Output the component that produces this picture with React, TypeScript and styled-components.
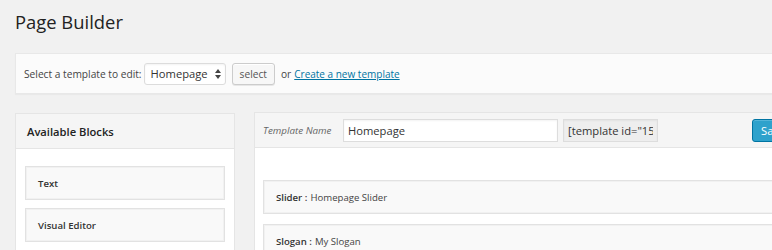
import styled, { createGlobalStyle } from 'styled-components';

const GlobalStyle = createGlobalStyle`
    html, body {
        margin: 0;
        padding: 0;
        background: #f1f1f1;
        overflow: hidden;
    }
    body {
        font-family: "Open Sans", "Liberation Sans", sans-serif;
        color: #444;
    }
`;

const Wrap = styled.div`
    width: 1010px;
    padding: 9px 0 0 15px;
`;

const Heading = styled.h1`
    margin: 0;
    font-size: 18.4px;
    font-weight: 400;
    line-height: 26px;
    color: #222;
`;

const Notice = styled.div`
    margin-top: 18px;
    height: 39px;
    display: flex;
    align-items: center;
    padding-left: 8px;
    background: #fbfbfb;
    border: 1px solid #e8e8e8;
    box-shadow: 0 1px 1px rgba(0, 0, 0, 0.03);
    font-size: 10.2px;
    color: #444;
`;

const SelectWrap = styled.div`
    position: relative;
    margin-left: 2px;
`;

const Select = styled.select`
    appearance: none;
    width: 82px;
    height: 22px;
    padding: 0 0 0 6px;
    font-family: inherit;
    font-size: 11.2px;
    color: #333;
    background: #fff;
    border: 1px solid #dcdcdc;
    border-radius: 3px;
    box-shadow: inset 0 1px 2px rgba(0, 0, 0, 0.05);
    outline: none;
`;

const Arrows = styled.svg`
    position: absolute;
    right: 5px;
    top: 6px;
    pointer-events: none;
`;

const Button = styled.button`
    margin-left: 6px;
    height: 22px;
    padding: 0 7px;
    font-family: inherit;
    font-size: 10.2px;
    color: #555;
    background: #f7f7f7;
    border: 1px solid #cccccc;
    border-radius: 3px;
    box-shadow: inset 0 1px 0 #fff, 0 1px 0 rgba(0, 0, 0, 0.08);
`;

const Or = styled.span`
    margin-left: 6px;
`;

const Link = styled.a`
    margin-left: 3px;
    font-size: 10px;
    color: #0074a2;
    text-decoration: underline;
`;

const Columns = styled.div`
    margin-top: 18px;
    display: grid;
    grid-template-columns: 220px 1fr;
    column-gap: 19px;
    align-items: start;
`;

const Panel = styled.div<{ $offset?: number }>`
    background: #fff;
    border: 1px solid #e5e5e5;
    margin-top: ${(p) => p.$offset ?? 0}px;
`;

const PanelHead = styled.div`
    height: 34px;
    display: flex;
    align-items: center;
    background: #f5f5f5;
    border-bottom: 1px solid #e5e5e5;
`;

const PanelTitle = styled.div`
    padding-left: 11px;
    font-size: 11.2px;
    font-weight: 600;
    color: #222;
`;

const BlockList = styled.div<{ $top: number; $side: number; $gap: number }>`
    display: flex;
    flex-direction: column;
    gap: ${(p) => p.$gap}px;
    padding: ${(p) => p.$top}px ${(p) => p.$side}px 20px;
`;

const Block = styled.div`
    height: 32px;
    display: flex;
    align-items: center;
    padding-left: 12px;
    background: #f9f9f9;
    border: 1px solid #e2e2e2;
    box-shadow: inset 0 0 0 1px #f1f1f1;
    font-size: 9.6px;
    color: #444;
`;

const Strong = styled.b`
    font-weight: 600;
    color: #333;
    margin-right: 3px;
`;

const NameLabel = styled.i`
    padding-left: 8px;
    width: 80px;
    font-size: 9.8px;
    color: #666;
`;

const Field = styled.input<{ $w: number; $bg: string }>`
    box-sizing: border-box;
    width: ${(p) => p.$w}px;
    height: 23px;
    margin-right: 5px;
    padding: 0 4px;
    font-family: inherit;
    font-size: 11.2px;
    color: #333;
    background: ${(p) => p.$bg};
    border: 1px solid #dddddd;
    box-shadow: inset 0 1px 2px rgba(0, 0, 0, 0.05);
    outline: none;
`;

const Save = styled.button`
    margin-left: 89px;
    height: 23px;
    padding: 0 8px;
    font-family: inherit;
    font-size: 11.2px;
    color: #fff;
    background: #2ea2cc;
    border: 1px solid #0074a2;
    border-radius: 3px;
    box-shadow: inset 0 1px 0 rgba(120, 200, 230, 0.5);
`;

function App() {
    const available = ['Text', 'Visual Editor', 'Widgets'];
    const template = [
        { kind: 'Slider', name: 'Homepage Slider' },
        { kind: 'Slogan', name: 'My Slogan' },
    ];
    return (
        <Wrap>
            <GlobalStyle />
            <Heading>Page Builder</Heading>
            <Notice>
                Select a template to edit:
                <SelectWrap>
                    <Select defaultValue="Homepage">
                        <option>Homepage</option>
                    </Select>
                    <Arrows width="6" height="10" viewBox="0 0 6 10">
                        <path d="M3 0 L6 4 L0 4 Z M0 6 L6 6 L3 10 Z" fill="#444" />
                    </Arrows>
                </SelectWrap>
                <Button>select</Button>
                <Or>or</Or>
                <Link href="#">Create a new template</Link>
            </Notice>
            <Columns>
                <Panel $offset={1}>
                    <PanelHead>
                        <PanelTitle>Available Blocks</PanelTitle>
                    </PanelHead>
                    <BlockList $top={17} $side={9} $gap={8}>
                        {available.map((b) => (
                            <Block key={b}>
                                <Strong>{b}</Strong>
                            </Block>
                        ))}
                    </BlockList>
                </Panel>
                <Panel>
                    <PanelHead>
                        <NameLabel>Template Name</NameLabel>
                        <Field $w={215} $bg="#fff" defaultValue="Homepage" />
                        <Field $w={95} $bg="#eeeeee" readOnly defaultValue='[template id="15"]' />
                        <Save>Save Template</Save>
                    </PanelHead>
                    <BlockList $top={32} $side={8} $gap={10}>
                        {template.map((t) => (
                            <Block key={t.kind}>
                                <Strong>{t.kind} :</Strong>
                                {t.name}
                            </Block>
                        ))}
                    </BlockList>
                </Panel>
            </Columns>
        </Wrap>
    );
}

export default App;
